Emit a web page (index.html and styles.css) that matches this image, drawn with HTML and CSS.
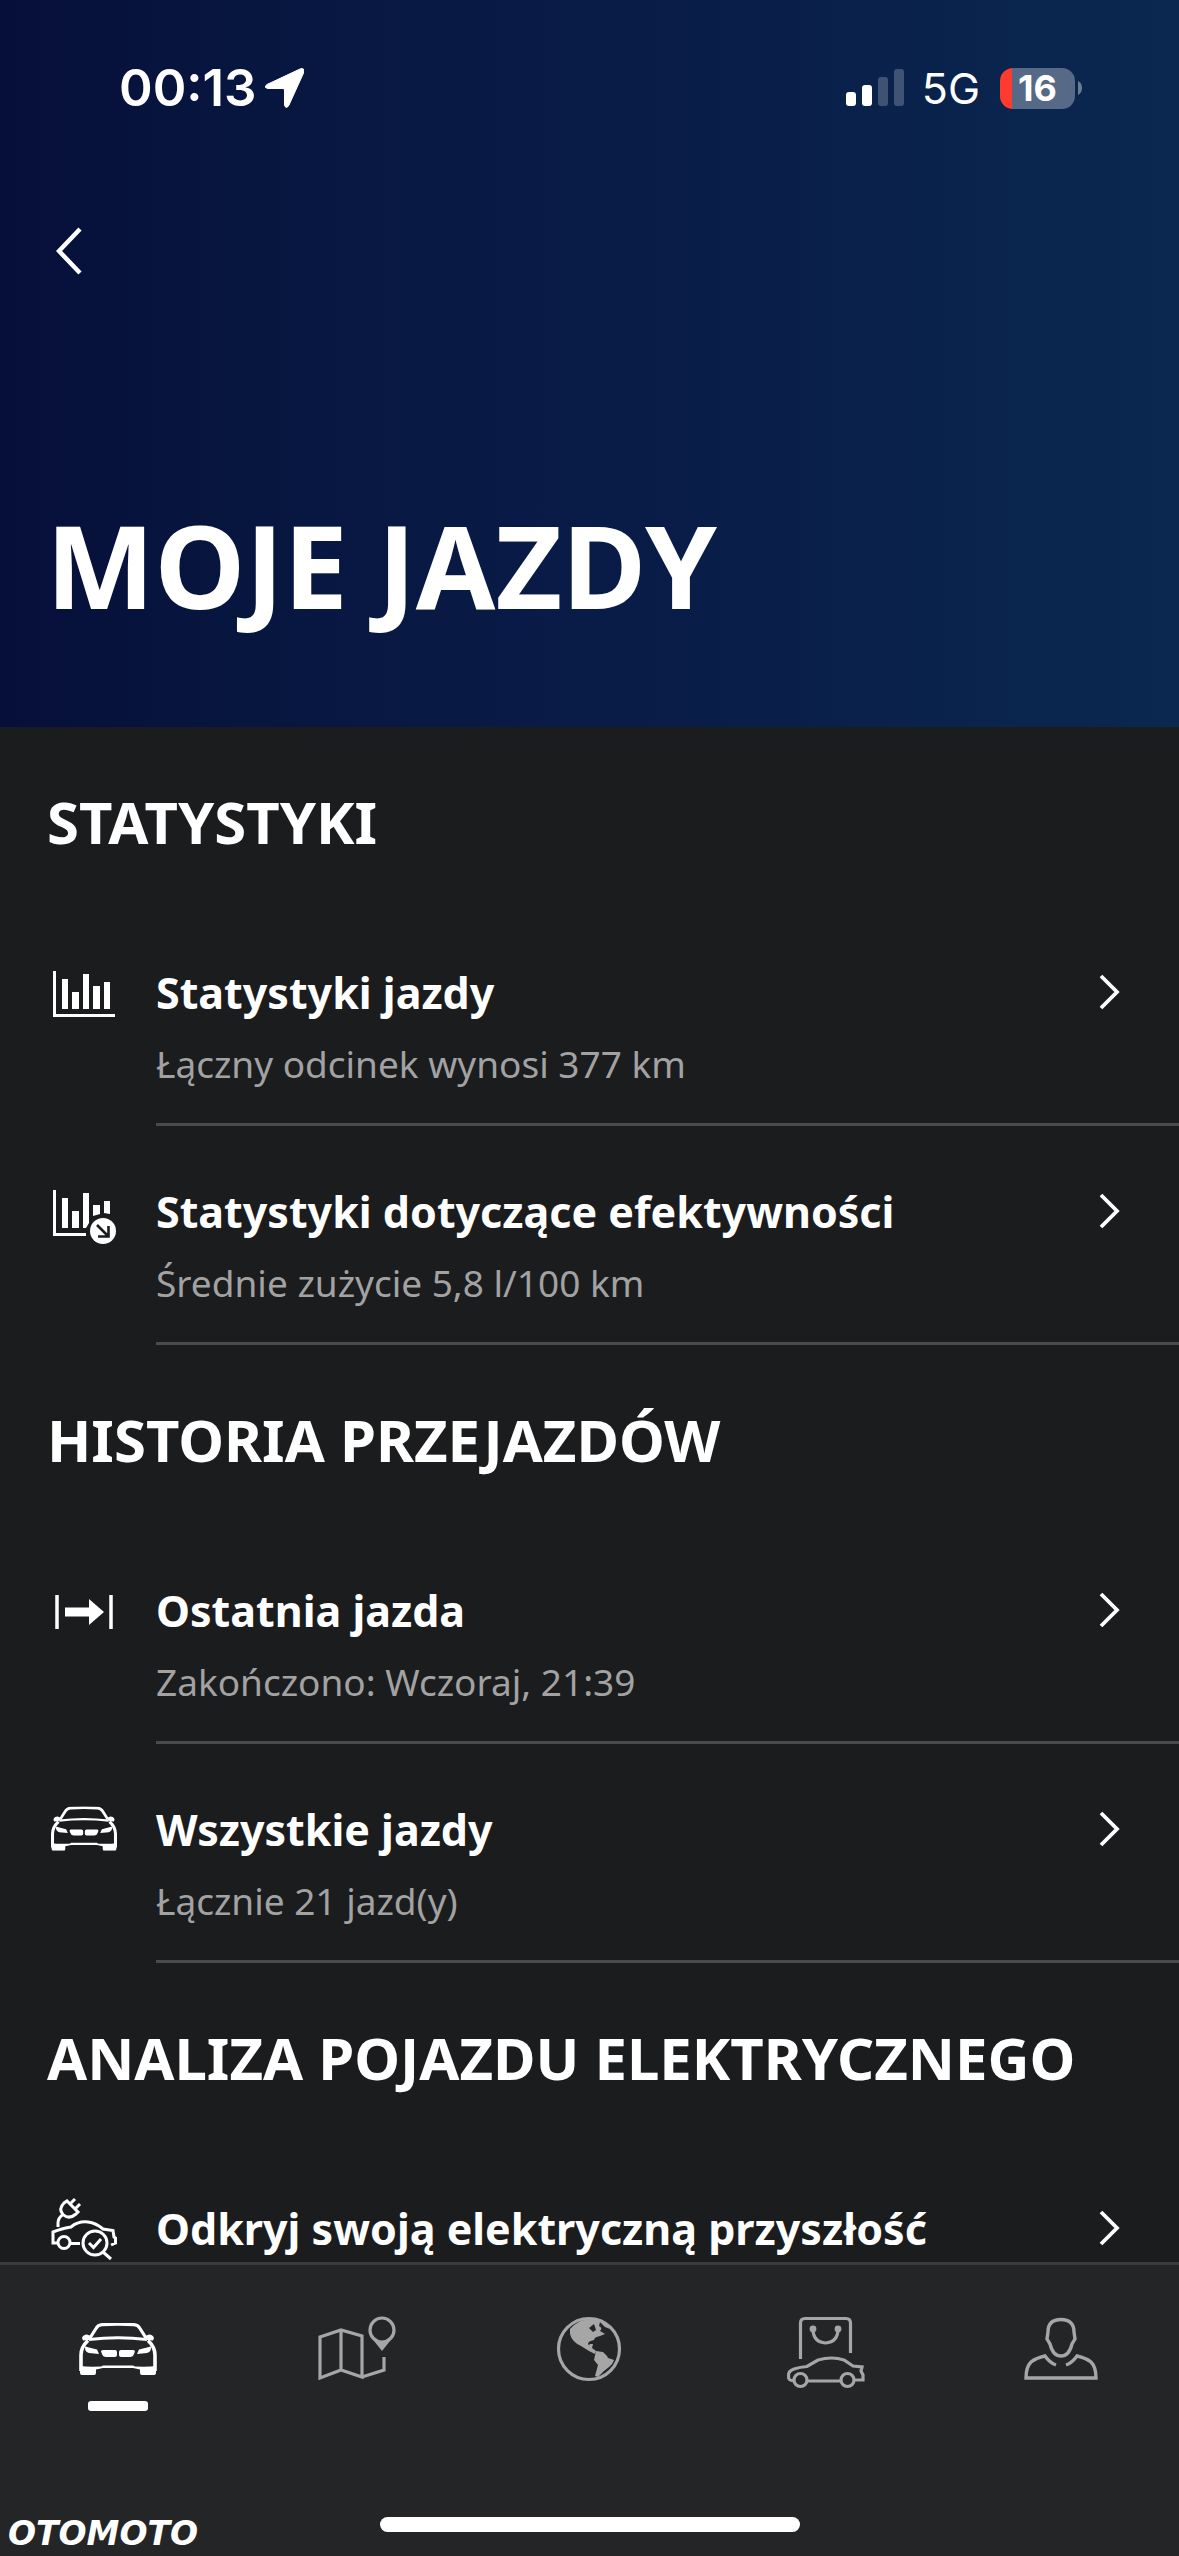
FILE: index.html
```html
<!DOCTYPE html>
<html lang="pl">
<head>
<meta charset="utf-8">
<meta name="viewport" content="width=device-width, initial-scale=1">
<title>Moje jazdy</title>
<link rel="stylesheet" href="styles.css">
</head>
<body>
<svg class="defs" aria-hidden="true">
  <symbol id="car-front" viewBox="0 0 78 52">
    <path d="M11 15 17 5.500Q19 2 23 1.700Q39 .6 55 1.700Q59 2 61 5.500L67 15" fill="none" stroke="currentColor" stroke-width="3.200"/>
    <path d="M9 17.500Q2 24 2 32V48M69 17.500Q76 24 76 32V48" fill="none" stroke="currentColor" stroke-width="3.600"/>
    <path d="M10 16.500Q39 13 68 16.500" fill="none" stroke="currentColor" stroke-width="2.800"/>
    <path d="M3 15Q4 11.500 8 11.500L12 13 10 17 4 17.500ZM75 15Q74 11.500 70 11.500L66 13 68 17 74 17.500Z" fill="currentColor"/>
    <path d="M6 24.500Q6 23 8 24L18 26.500 20 31 10 30Q6 29 6 24.500ZM72 24.500Q72 23 70 24L60 26.500 58 31 68 30Q72 29 72 24.500Z" fill="currentColor"/>
    <path d="M22 28.500Q22 27 24 27H36Q38 27 38 29V32Q38 34 36 34H27Q24 34 23 31ZM56 28.500Q56 27 54 27H42Q40 27 40 29V32Q40 34 42 34H51Q54 34 55 31Z" fill="currentColor"/>
    <path d="M1 43Q8 44 22 43.500L24 42.500H54L56 43.500Q70 44 77 43V50Q77 52 75 52H63Q61 52 61 50V46.500L54 45H24L17 46.500V50Q17 52 15 52H3Q1 52 1 50Z" fill="currentColor"/>
  </symbol>
  <symbol id="chevron" viewBox="0 0 22 36">
    <path d="M3 2 19 18 3 34" fill="none" stroke="currentColor" stroke-width="3.800"/>
  </symbol>
</svg>

<header class="hero">
  <div class="status">
    <span class="time">00:13</span>
    <svg class="location" viewBox="0 0 39 40"><path d="M35 1Q40 -1 38.500 5L24 37Q21 42 19.500 37V22Q19.500 20.500 18 20.500H3Q-2 19.500 2 16.500Z" fill="#fff" stroke="#fff" stroke-width="1" stroke-linejoin="round"/></svg>
    <svg class="signal" viewBox="0 0 58 38"><g fill="#fff"><rect y="23" width="10" height="14" rx="3"/><rect x="16" y="16" width="10" height="21" rx="3"/><g opacity=".22"><rect x="32" y="8" width="10" height="29" rx="3"/><rect x="48" width="10" height="37" rx="3"/></g></g></svg>
    <span class="network">5G</span>
    <span class="battery">16</span>
    <svg class="nub" viewBox="0 0 4 14"><path d="M0 0Q4 2 4 7T0 14Z" fill="#fff" opacity=".4"/></svg>
  </div>
  <button class="back" type="button" aria-label="Wstecz">
    <svg viewBox="0 0 26 48"><path d="M24 2 3 24 24 46" fill="none" stroke="#fff" stroke-width="4.500"/></svg>
  </button>
  <h1>MOJE JAZDY</h1>
</header>

<main class="content">
  <section>
    <h2>STATYSTYKI</h2>
    <a class="row" href="#stats">
      <svg class="icon" viewBox="0 0 80 80"><path d="M10.500 15V59.500H71" fill="none" stroke="#fff" stroke-width="3"/><path d="M18 23h6v30h-6zM28 36h7v17h-7zM39 18h6v35h-6zM49 30h7v23h-7zM60 26h6v27h-6z" fill="#fff"/></svg>
      <span class="body"><span class="text"><b>Statystyki jazdy</b><small>Łączny odcinek wynosi 377 km</small></span><svg class="chevron"><use href="#chevron"/></svg></span>
    </a>
    <a class="row" href="#efficiency">
      <svg class="icon" viewBox="0 0 80 80"><path d="M10.500 15V59.500H42" fill="none" stroke="#fff" stroke-width="3"/><path d="M18 23h6v30h-6zM28 36h7v17h-7zM39 18h6v30l-3 5h-3zM49 30h7v9l-7 2zM60 26h6v13l-6-1z" fill="#fff"/><circle cx="59" cy="56" r="13" fill="#fff"/><path d="M53 50 64 61M64.500 51V61.500H54" fill="none" stroke="#1b1c1e" stroke-width="2.600"/></svg>
      <span class="body"><span class="text"><b>Statystyki dotyczące efektywności</b><small>Średnie zużycie 5,8 l/100 km</small></span><svg class="chevron"><use href="#chevron"/></svg></span>
    </a>
  </section>
  <section>
    <h2>HISTORIA PRZEJAZDÓW</h2>
    <a class="row" href="#last">
      <svg class="icon" viewBox="0 0 80 80"><path d="M13 21V55M67 21V55" stroke="#fff" stroke-width="3.500"/><path d="M21 33.500H45V25L60 38 45 51V42.500H21Z" fill="#fff"/></svg>
      <span class="body"><span class="text"><b>Ostatnia jazda</b><small>Zakończono: Wczoraj, 21:39</small></span><svg class="chevron"><use href="#chevron"/></svg></span>
    </a>
    <a class="row" href="#all">
      <svg class="icon" viewBox="-8 -16 94 94"><use href="#car-front" width="78" height="52"/></svg>
      <span class="body"><span class="text"><b>Wszystkie jazdy</b><small>Łącznie 21 jazd(y)</small></span><svg class="chevron"><use href="#chevron"/></svg></span>
    </a>
  </section>
  <section>
    <h2>ANALIZA POJAZDU ELEKTRYCZNEGO</h2>
    <a class="row" href="#electric">
      <svg class="icon" viewBox="0 0 80 80"><g fill="none" stroke="#fff" stroke-width="3">
        <path d="M14 35V31Q14 26 19 22.500M19 22.500Q14 17 20 11L23 9 34 20 32 22Q25 28 19 22.500M26 12 31 7M31 17 36 12" />
        <path d="M13 51H9V40Q16 37 27 35Q34 29 44 30Q52 31 59 37L69 38.500 70 45 71.500 46V51L67 53M26 51.500H36"/>
        <circle cx="20" cy="50.500" r="6"/><circle cx="51" cy="51" r="12" fill="#1b1c1e"/><path d="M45 51 49.500 55.500 57 47M59 60 67 67"/>
      </g></svg>
      <span class="body"><span class="text"><b>Odkryj swoją elektryczną przyszłość</b></span><svg class="chevron"><use href="#chevron"/></svg></span>
    </a>
  </section>
</main>

<nav class="tabs">
  <a class="tab active" href="#car" aria-label="Pojazd" aria-current="page">
    <svg viewBox="-6 -18 90 90"><use href="#car-front" width="78" height="52"/></svg>
  </a>
  <a class="tab" href="#map" aria-label="Mapa">
    <svg viewBox="0 0 90 90"><g fill="none" stroke="currentColor" stroke-width="3.200"><path d="M11 32 32 25 53 31V72L32 65 11 73ZM32 25V65M53 72 75 65V52"/><circle cx="73" cy="25" r="12"/></g><path d="M61 31Q73 43 85 31L73 46Z" fill="currentColor"/></svg>
  </a>
  <a class="tab" href="#discover" aria-label="Odkrywaj">
    <svg viewBox="0 0 90 90"><circle cx="45" cy="44" r="30.500" fill="none" stroke="currentColor" stroke-width="3.200"/><path d="M26 24Q35 14 46 14L56 16Q63 18 66 24L61 22 56 17 55 21Q59 23 56 26L61 29 56 31Q50 32 50 35 44 36 44 39 45 41 46 39L49 39 48 43 52 46 51 49 45 46 37 41Q28 37 26 29Z" fill="currentColor"/><path d="M45 23 50 19 52 25 49 27Z" fill="#242527"/><path d="M52 46 59 47 63 51 64 53 70 55Q69 59 65 62L60 66 54 72 51 71 54 60 50 55Z" fill="currentColor"/></svg>
  </a>
  <a class="tab" href="#store" aria-label="Sklep">
    <svg viewBox="0 0 90 90"><g fill="none" stroke="currentColor" stroke-width="3.200"><path d="M20.500 54V18Q20.500 13.500 25 13.500H66Q70.500 13.500 70.500 18V48M33 24Q33 37 45.500 38Q58 37 58 24"/><path d="M14 75.500Q8 76 8.500 71Q8 66 14 64Q20 62 27 61.500L38 55Q52 51 64 55L73 61 82 62 81 66 83 70V75H75M28 76H61"/><circle cx="20.500" cy="75" r="6.500"/><circle cx="67.500" cy="75" r="6.500"/></g><circle cx="33" cy="24" r="3.400" fill="currentColor"/><circle cx="58" cy="24" r="3.400" fill="currentColor"/></svg>
  </a>
  <a class="tab" href="#profile" aria-label="Profil">
    <svg viewBox="0 0 90 90"><g fill="none" stroke="currentColor" stroke-width="3.400"><path d="M45 14.500Q32 14.500 32 27L31 34 34 39Q37 51 45 51Q53 51 56 39L59 34 58 27Q58 14.500 45 14.500Z"/><path d="M40 60Q34 58 29 51Q20 53 15 57Q10 62 10 73H80Q80 62 75 57Q70 53 61 51Q56 58 50 60"/></g></svg>
  </a>
  <span class="home"></span>
  <span class="watermark">OTOMOTO</span>
</nav>
</body>
</html>
```
FILE: styles.css
```css
* { box-sizing: border-box; }

body {
  margin: 0;
  height: 100vh;
  display: flex;
  flex-direction: column;
  background: #1b1c1e;
  color: #fff;
  font-family: "Noto Sans", sans-serif;
}

svg { display: block; flex: none; }
.defs { position: absolute; width: 0; height: 0; }

.hero {
  flex: none;
  padding: 0 46px 84px;
  background: linear-gradient(90deg, #060f3a 0%, #07163f 20%, #091c48 55%, #0a2850 100%);
}

.status {
  height: 176px;
  padding: 0 51px 0 73px;
  display: flex;
  align-items: center;
  font-family: Inter, sans-serif;
}
.time { font-size: 51px; font-weight: 600; line-height: 60px; }
.location { width: 39px; height: 40px; margin-left: 8px; }
.signal { width: 58px; height: 38px; margin-left: auto; }
.network { margin-left: 18px; font-size: 43px; line-height: 52px; }
.battery {
  width: 75px;
  margin-left: 20px;
  border-radius: 13px;
  background: linear-gradient(90deg, #ff3b30 12px, #566986 12px);
  font-size: 36px;
  font-weight: 700;
  line-height: 41px;
  text-align: center;
}
.nub { width: 4px; height: 14px; margin-left: 3px; }

.back {
  display: flex;
  align-items: center;
  width: 88px;
  height: 150px;
  padding: 0 10px;
  border: 0;
  background: none;
}
.back svg { width: 26px; height: 48px; }

h1 {
  margin: 161px 0 0;
  font-size: 115px;
  font-weight: 700;
  line-height: 156px;
}

.content {
  flex: 1;
  min-height: 0;
  overflow-y: auto;
  scrollbar-width: none;
}

h2 {
  margin: 0;
  padding: 55px 47px 45px;
  font-size: 58px;
  font-weight: 700;
  line-height: 80px;
}

.row {
  display: flex;
  gap: 32px;
  padding-left: 44px;
  color: inherit;
  text-decoration: none;
}
.icon { width: 80px; height: 80px; margin-top: 49px; }
.body {
  flex: 1;
  display: flex;
  padding: 56px 59px 33px 0;
  border-bottom: 3px solid #4a4b4d;
}
.text { flex: 1; display: flex; flex-direction: column; gap: 15px; }
.text b { font-size: 43px; font-weight: 700; line-height: 60px; }
.text small { font-size: 37px; line-height: 52px; color: #a2a2a3; }
.chevron { width: 22px; height: 36px; margin-top: 11px; }

.tabs {
  position: relative;
  flex: none;
  display: grid;
  grid-template-columns: repeat(5, 1fr);
  justify-items: center;
  padding-top: 40px;
  border-top: 3px solid #3a3b3d;
  background: #242527;
}
.tab { color: #a6a6a7; }
.tab svg { width: 90px; height: 90px; }
.tab.active { color: #fff; }
.tab.active::after {
  content: "";
  display: block;
  width: 60px;
  height: 10px;
  margin: 6px auto 0;
  border-radius: 3px;
  background: #fff;
}
.home {
  grid-column: 1 / -1;
  width: 420px;
  height: 15px;
  margin: 106px 0 24px;
  border-radius: 8px;
  background: #fff;
}
.watermark {
  position: absolute;
  left: 8px;
  bottom: 0;
  font: italic 700 33px/44px "DejaVu Sans", sans-serif;
}
```
